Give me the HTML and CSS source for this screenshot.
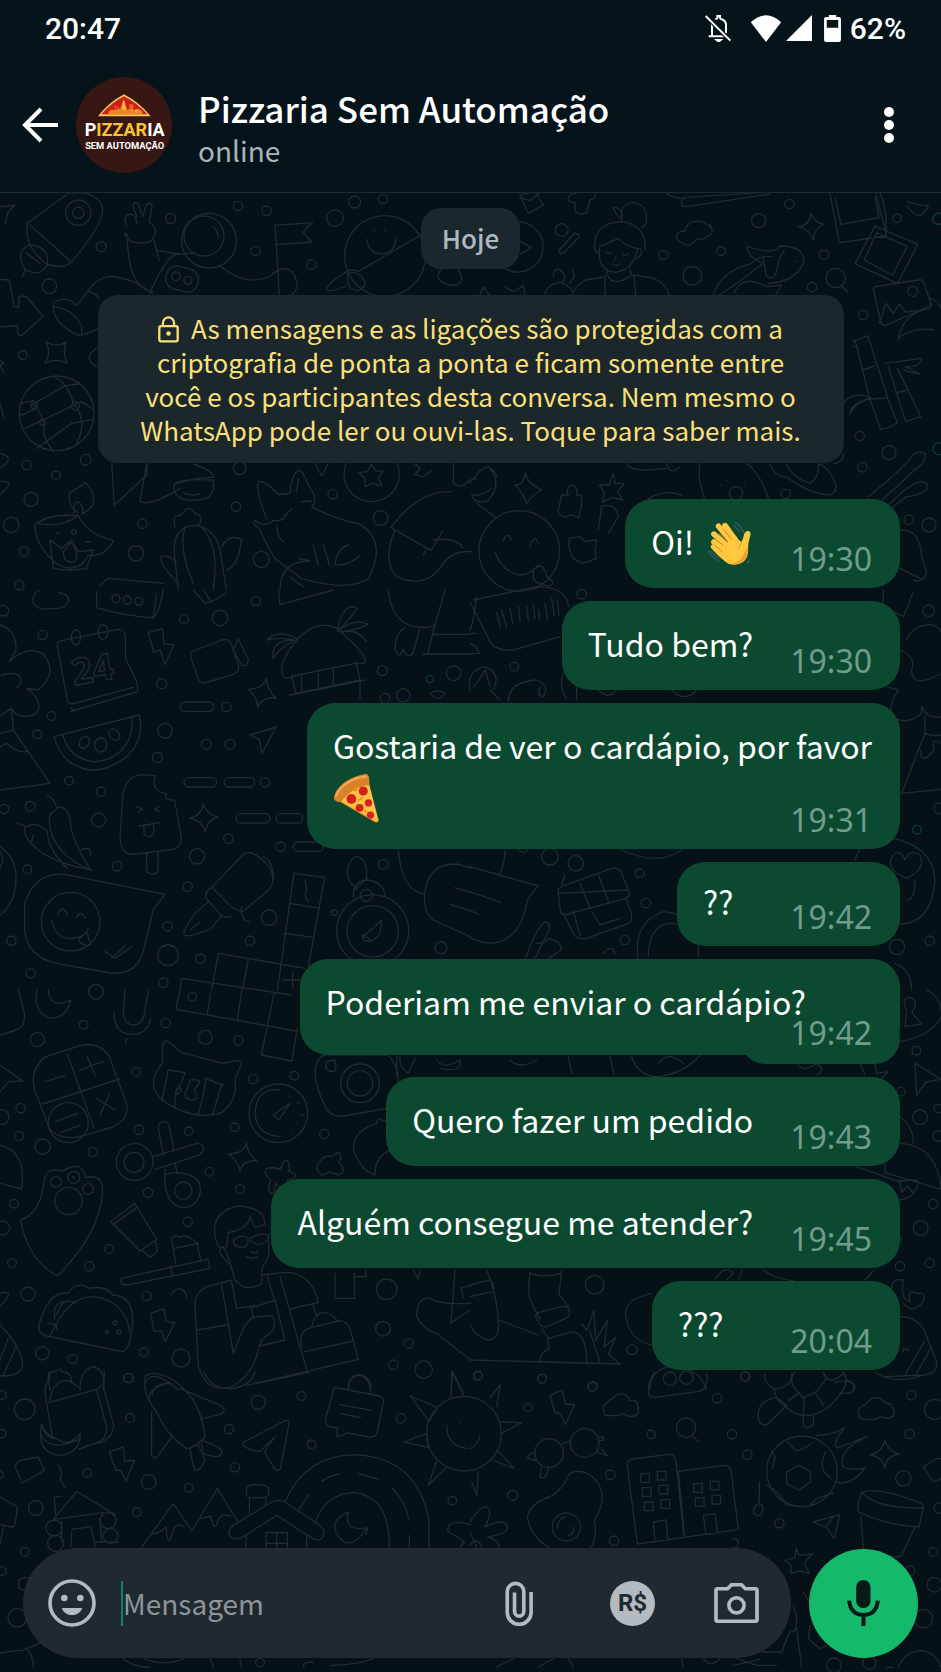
FILE: index.html
```html
<!DOCTYPE html>
<html lang="pt-BR">
<head>
    <meta charset="UTF-8">
    <meta name="viewport" content="width=device-width, initial-scale=1.0">
    <title>Pizzaria Sem Automação</title>
    <link rel="stylesheet" href="styles.css">
</head>
<body>
    <!-- Papel de parede -->
    <svg class="wallpaper" viewBox="0 0 2823 5016" preserveAspectRatio="xMidYMin slice" aria-hidden="true">
        <g transform="translate(0 570)">
            <path d="M82 100L205 10Q300 0 308 60Q305 110 215 215Q190 240 140 222Q70 170 82 100ZM90 105L213 215M62 190q20-35 45-22q40 10 35 55q-20 35-50 22q-30-5-30-55M75 240l-8 20M0 50l45-4q-30 20-28 58M80 190l40 30"/>
            <circle cx="235" cy="68" r="38"/><circle cx="235" cy="68" r="17"/>
            <path d="M380 110q-15-35 15-38q15 10 15 30M410 80l-10-30q-2-18 14-10l14 40l12-38q16-8 16 8l-8 48q20 10 18 30q-8 35-40 30q-45 4-52-30M380 130q5 90 20 125q20 45 58 50M462 150l16 62M448 312q50-110 78-118l60-6M475 182l60 10"/>
            <circle cx="627" cy="152" r="82"/><circle cx="612" cy="138" r="60"/><path d="M640 110q15 15 15 35"/>
            <rect x="497" y="232" width="98" height="70" rx="32" transform="rotate(14 546 267)"/><circle cx="528" cy="259" r="13"/><circle cx="564" cy="271" r="12"/>
            <path d="M660 228q80 65 150 30q60-50 80 15q5 30-20 45M838 312L825 106l112-8l-28 28l26 30l-105 8"/>
            <circle cx="1155" cy="198" r="121"/><path d="M1100 148q5 42 45 44q40-5 42-45M1122 122v3M1155 118v3M980 300q0-20 60-55q15-10 35 0l190-112M980 300q10 8 60-12M1045 250q-10 50 30 52q30-15 15-35q-15-25-45-17"/>
            <path d="M1330 235q-30 20-5 40q35 20 55 5q10-20-5-40"/>
            <path d="M0 268l28 2l14 80l14 2v-30q20-10 30 5l44 52l-66 58q-15 0-10-30l-54 4M165 335q40-20 65 12l48-62q30-30 70-24q60 10 110 50M160 340q-5 60 75 96q35-5 60-20M160 350q60 5 85 60v20M268 305q20 5 30 22"/>
            <path d="M138 455q30 20 60 2q-10 30 2 62q-30-15-64 0q18-30 2-64M0 510l12 10l-12 6l12 22"/>
            <circle cx="170" cy="670" r="112"/><path d="M75 715l170-80l30 20M95 645l100-58l40-5M110 775L215 700l65-12M100 640q40 50 30 90q10 30 30 55M160 560q45 20 60 80q45 50 10 120M62 640l40-8M62 675q30-10 45-20"/>
            <circle cx="102" cy="645" r="10"/><circle cx="226" cy="648" r="12"/><circle cx="128" cy="697" r="9"/>
            <path d="M290 475q-45 30 0 55M0 640l12 45M335 820l8 125l98-90V820M440 820l-20 115q30 15 120-40M525 880q20-15 115-10q5 40-20 55q-70 15-90-10q-15-20-5-35M580 822q60 20 60 40q-60 0-110 20M550 908q20 12 50 4"/>
            <path d="M0 790q50 10 0 45M0 875q55-5 0 38M235 968q-35-20-25-60l48-30q50 60-8 92M222 970q-5-20 10-36q20 8 15 38M105 1005q40-35 130-28q25 55 105 75q-20 45-75 45q-30 55-90 28q-70-55-70-120ZM110 1000q80 15 125-25M150 1050l35 25l30-25l20 35l45-5l-20 55q-50 10-100 0zM170 1030l10-1M258 1056l12-1"/>
            <circle cx="222" cy="1027" r="7"/><path d="M190 1085q15-15 20-30q35 40 10 62q-30 0-30-32M525 1010q-10-40 15-32l20-22q15-5 25 15q30 10 10 35M535 1200l-12-110q-5-80 62-84q65 10 76 80l18 114M555 1010q-20 70 25 170M600 1008q60 50 40 190M665 1070q20-40 60-22q-10 80-45 92M535 1180q-60-60-52-80q30-10 45 20M300 1185l25-20l165 15"/>
            <path d="M800 985q-35-85-25-110q20-5 60 38q40 0 35-10q10-70 35-60l25 50q25 35 5 58q80 40 140 50q90 50 30 165q-60 40-200 0l-80-60q-30-50-50-95q-20-5-10-20q30 25 55 0q30 5 35-15l20-18M890 905q5-30 5-40M905 935l30-2M940 1065l15 60M970 1065l18 60M1005 1125q5-50 40-60M1010 1125q40 0 70-28M830 1010q5 40 20 45M895 1105l35 8q-90 0-90 87M870 1160l40 30"/>
            <circle cx="1115" cy="852" r="83"/><path d="M1115 822l10 20l24 2l-14 18l10 26l-28-8l-22 10v-24l-18-18l26-4zM945 820l20 38l20-38M1245 822l15 12l-15 20l25 6l25-20M1355 905q-100-5-182 108l120 68l35-58M1185 1020q-40 90 5 140q90 40 140-40q30-40 83-35M1278 1078l-8 18M1300 1050q70-10 90 25M1360 820v60q20 20 50-10"/>
            <circle cx="148" cy="289" r="22"/><circle cx="304" cy="170" r="15"/><circle cx="714" cy="48" r="14"/><circle cx="512" cy="86" r="15"/><circle cx="800" cy="62" r="14"/><circle cx="767" cy="183" r="14"/><circle cx="934" cy="224" r="14"/><circle cx="1005" cy="84" r="25"/><circle cx="1149" cy="27" r="14"/><circle cx="1064" cy="36" r="18"/><circle cx="68" cy="496" r="13"/><circle cx="80" cy="825" r="14"/><circle cx="257" cy="809" r="16"/><circle cx="168" cy="856" r="13"/><circle cx="93" cy="928" r="21"/><circle cx="34" cy="1005" r="23"/><circle cx="72" cy="1084" r="14"/><circle cx="427" cy="1001" r="14"/><circle cx="408" cy="1090" r="23"/><circle cx="708" cy="950" r="14"/><circle cx="719" cy="835" r="19"/><circle cx="784" cy="1108" r="24"/><circle cx="998" cy="913" r="14"/><circle cx="1142" cy="984" r="22"/><circle cx="58" cy="1186" r="14"/>
        </g>
        <g transform="translate(1410 570)">
            <path d="M150 15l45-10l25 40l-45 25zM150 22l30 10l30-25M300 15l30-10h40q15 20-10 25l-10 38q-20 10-35-5v-25q-30 0-15-23M120 100a75 75 0 1 1-15 135M152 155l32 18l-32 20"/>
            <circle cx="275" cy="120" r="19"/><path d="M268 180l45-50q15 0 15 10l-48 50q-12 5-12-10M375 180q-10-80 80-85q75 10 70 85M388 170l58-25q20 25 55 30M388 175q-5 70 50 72q55-10 65-72q15 0 10 20l-12 10M375 165q-5 20 15 30M408 186q10 8 18 0M458 192q10 8 18-2M438 200l-5 12M428 222q10 8 20 0M456 90q-10-50 35-52q45 8 38 60l-10 15M455 88q-20-15-25-35q20-5 28 25M412 245l-5 15l-60 10q-30 15-42 48M480 240l5 15l60 8q50 20 52 55M405 265v50M492 260l5 55M415 260q15 30 65 0M225 315q5-35 50-38q25 10 35 30M250 260q0-25 18-22q25 15 10 38M308 240l5 20l-15 20M105 290l25 15l30-18l5 30M30 315l10-25l18 25"/>
            <path d="M590 10q30 20 60 12l280-18M640 25q-15 25 10 25L900 12M640 160q-30-10-15-32q10-5 20-5q10-40 60-25q20 20 15 5q15 30-5 35q-20 15-35 8q-20 30-40 14"/>
            <path d="M985 110q35-5 38-40q10 30 38 32q-30 15-30 48q-15-35-46-40M1080 10l28 148l142-20L1215 0M1095 25l18 78l115-20L1215 20M1228 5q25 50 20 130M1215 108l128 55l-60 118l-128-60zM1220 128l92 42l-45 85l-85-45zM1310 45q20 30 35 32q20-5 30-30q-30 0-65-12M1215 290l130-20q15-5 20 20l20 55l-140 62q-10 0-15-20l-20-90zM1228 400l20-60l22 30l18-28l20 25l30-5"/>
            <circle cx="1328" cy="304" r="15"/><path d="M1285 450q10-80 95-95v-30q30 10 33 30M1290 440q50-30 100-20"/>
            <path d="M730 315q20-70 115-95q20-25 60-20M830 168q80 30 100 0q75 0 72 50q-30 60-108 62M830 170q5 30 30 40l18 10q-60 50-130 95M880 205l8 50q20 20 30-5q10-50 25-70M790 310q30-60 100-20l45-5l-20 35M980 212v3"/>
            <circle cx="1097" cy="264" r="29"/><path d="M1115 288l20 20M1148 455l45-18l60 185M1155 450l45 180l32 88q20 0 50-20l-30-75l-50 5M1148 470h15M1178 540l35-12M1245 520l110-15q-5 30-50 25l45 22q-10 0-50-12M1255 530l52 165l45-15l-40-85l-30-60M1282 608l30-8M1120 640q30-40 85-15q-50 10-65 48q0-30 60-50"/>
            <path d="M1195 920q100-80 130-120q15-20 40-10q5 25-20 40L1215 950M1255 945q60-60 95-70q30 0 18 25q-30 20-60 20l-50 40M1090 820q30 0 30-30M900 825q20 40 50 35l20 15q60 40 110 40q25-10 15-40q-20-45-50-55M950 825q20 40 70 55q30-20 25-60"/>
            <path d="M20 865q-20 0-20 15M80 860q-5-20-25-28M10 870q30-50 50-35q40 50-10 100q-40 5-45-20q30 5 60-20M165 845q5 35 50 55q-30 15-45 40q-10-30-35-55q30 0 30-40M265 960l10-45h20q-10-20 10-30q20 5 15 30h15v25l-8 42l-25-8l-15 8l-22-10zM430 850l5 30h28l-20 25l15 25l-30-8l-30 15l5-30l-15-22h30zM470 820q5 20 60 20l60-4M590 820q10 40 40 10M690 820q-10 40 15 110M830 820q40 30 65 105M750 885v2M770 870v2M790 890v2M825 885v2M535 925q60-30 100-8"/>
            <circle cx="798" cy="910" r="20"/><circle cx="148" cy="1083" r="121"/><path d="M100 1055q10-35 25-5M180 1068q15-40 25-5M75 1085q20 60 75 70q30 0 55-30M190 1140q30-30 40 20q30 20 10 28q-50-5-50-30zM20 940l55 40M385 1020l10-70q40-15 50 30l-30 50M300 1045l30-5l15 15l35-5l-5 35l5 20l-40 15l-30-15q-20-35-10-60M1290 1020q60-5 65 80l15 50q-10 30-40 20M1290 1135l60 30"/>
            <circle cx="580" cy="195" r="14"/><circle cx="667" cy="257" r="28"/><circle cx="753" cy="184" r="13"/><circle cx="866" cy="92" r="21"/><circle cx="958" cy="42" r="14"/><circle cx="1026" cy="291" r="14"/><circle cx="1062" cy="194" r="14"/><circle cx="1281" cy="85" r="13"/><circle cx="1179" cy="375" r="14"/><circle cx="1169" cy="738" r="14"/><circle cx="1257" cy="788" r="21"/><circle cx="1177" cy="832" r="14"/><circle cx="947" cy="912" r="14"/><circle cx="1316" cy="989" r="14"/><circle cx="1377" cy="1005" r="21"/>
            <circle class="wallpaper-teal" cx="1405" cy="86" r="17"/><circle class="wallpaper-teal" cx="1407" cy="776" r="18"/>
        </g>
        <g transform="translate(0 1770)">
            <path d="M100 40q-5-30 20-40M100 40q20 25 55 15q45 5 50-25q0-20-30-22M290 5v48q80 25 170 30q20-20 30-85M460 80l10-70M580 0l35 40q30-5 60-30M612 0l20 35M835 0l5 44L1000 0"/>
            <circle cx="348" cy="26" r="12"/><circle cx="382" cy="30" r="12"/><circle cx="416" cy="34" r="12"/>
            <path d="M172 170q-2-15 12-18l170-34q18 0 22 18v68l34 70l4 30l-200 60M172 170l30 160q2 12 14 12l185-50M212 352l5 10l190-55"/>
            <ellipse cx="228" cy="142" rx="14" ry="22"/><ellipse cx="309" cy="126" rx="15" ry="22"/>
            <text class="wallpaper-day" x="215" y="275" transform="rotate(-10 285 240)">24</text>
            <path d="M445 128l42-12l6 46l28 2l-26 60l-14-44l-20 6zM575 185l90-35q20-5 28 10l22 65q5 20-15 28l-85 26q-15 0-20-12l-22-62q-3-15 2-20M700 180l15-34l30 65q-5 20-20 15zM745 298q40 0 55-32q0 30 28 58q-40-5-55 28q0-30-28-54M750 435l78-24l-42 80l-8-42z"/>
            <path d="M0 105q50 15 48 75l-20 35q50-50 100-25q50 60-15 110l-32-5q60 50 20 80q-50 15-66-20l-32 20M5 255q60-15 58 20q-5 15-15 18M35 360l5 60L150 580L0 600M0 430l40-10M0 470l20-10q30 30 60 25"/>
            <path d="M162 440l256-65q20 90-60 140q-80 50-150 0q-35-30-46-75ZM188 435q20 70 90 80q70 0 105-60q18-35 12-72"/>
            <ellipse cx="253" cy="457" rx="14" ry="19" transform="rotate(30 253 457)"/><ellipse cx="302" cy="465" rx="18" ry="21"/><ellipse cx="343" cy="434" rx="14" ry="19" transform="rotate(-40 343 434)"/>
            <path d="M845 240q0-35 45-90q60-65 120-35q70 60 85 90q10 20-30 15l-185 38q-30 20-35-18M1012 120q20-90 60-65q-20 30-58 68q50-40 90-20q-30 15-80 22q50-10 75 30M890 145q-60-30-88 5q40-10 80 0q-70 0-62 55q15-30 65-55M875 255l12 55L1080 270l-12-55M870 315l225-45M955 250v50M1000 238v48M1080 275v50M905 300v-45"/>
            <rect x="541" y="336" width="100" height="28" rx="14"/><rect x="552" y="563" width="98" height="28" rx="14"/><rect x="672" y="563" width="92" height="28" rx="14"/><rect x="708" y="671" width="102" height="28" rx="14"/><rect x="828" y="671" width="80" height="28" rx="14"/><rect x="880" y="756" width="90" height="28" rx="14"/>
            <path d="M466 557q-15 45 34 55q-10 20 24 18l20 115q0 30-30 34l-110 14q-40 2-44-45l8-130q5-60 60-64ZM440 788v50q0 14 18 14q16 0 16-14v-54M410 650l18 8l-14 8M480 648l-16 10l14 6M418 708l62-10M432 706v25q10 15 24 5q10-10 4-32"/>
            <path d="M568 685q35-5 42-44q10 35 44 40q-30 5-38 44q-10-35-48-40M140 615q25 10 30 40q25-15 40 30q0 60 62 155q-120-50-125-150q0-20 20-30M52 700l30 10q25-20 60 15q0 50 60 110M75 710q-10 30 40 70q50 40 160 60M100 735l-5 20M240 780q40-15 30 20M0 770q60 40 45 130q-10 50-45 75M0 785q15 20 0 50"/>
            <path d="M195 853l300 60l-35 44l-28 120q-20 80-100 72l-160-28q-90-20-98-100v-80q30-95 121-88Z"/>
            <circle cx="212" cy="995" r="88"/><path d="M155 990q10 55 55 55q45 0 55-30M174 972q12-30 28 0M230 982q12-25 26 2M235 1050l25-25l12 38q-20 10-37-13M315 1085l30 20l50-35M335 1105l40-38"/>
            <path d="M638 890l92-98q15-10 35 2q50 30 54 70q0 25-20 42l-70 58q-30 0-70-50q-20-15-21-24M635 892q-25 15-15 35l45 50q20 10 28 0M625 935l-45 40l-28 50q-5 15 20 12l58-18l32-40M570 1020l30-25M725 950q-5 40 22 45M790 800q30 15 30 65"/>
            <path d="M882 850l92 12L925 1130M882 850L832 1200M868 940l92 15M852 1030l90 12M655 1090l260 45M655 1090L635 1200M745 1108l-18 92M545 1165l330 50M545 1165l-5 35M915 870l5 30q-10 20 5 35M850 1170h60M878 1145v50"/>
            <circle cx="1118" cy="1022" r="108"/><circle cx="1118" cy="1024" r="77"/><circle cx="1099" cy="916" r="18"/><path d="M1060 920q0-50 45-50q50 10 50 50M1042 840q10-40 30-40q30 5 28 65l-30 30q-30-20-28-55M1090 1040l55-50l-5 40l-20 22q-10 0-18-10zM1090 1030q-10 30 30 22"/>
            <path d="M1195 780q10 120 75 132M1280 880q20-60 90-58l43 12M1280 880q-20 80 20 110l110 50M1365 893l48 15M1350 943l63 20M1165 0q10 110 100 112q30 0 40-8L1335 0M1215 112q-30 20-30 65q15 35 25 0q15 35 30 10l18-68M1305 105l-22 85M1268 192h145M1300 133h110"/>
            <circle cx="1210" cy="316" r="20"/><circle cx="1155" cy="325" r="15"/><path d="M1290 310q20-15 45 0q-20 30-45 0"/>
            <circle cx="10" cy="62" r="16"/><circle cx="128" cy="135" r="14"/><circle cx="552" cy="88" r="14"/><circle cx="660" cy="84" r="23"/><circle cx="767" cy="33" r="14"/><circle cx="485" cy="281" r="15"/><circle cx="679" cy="351" r="14"/><circle cx="154" cy="378" r="13"/><circle cx="112" cy="433" r="13"/><circle cx="495" cy="422" r="22"/><circle cx="619" cy="463" r="15"/><circle cx="690" cy="463" r="15"/><circle cx="472" cy="502" r="15"/><circle cx="207" cy="572" r="13"/><circle cx="303" cy="605" r="14"/><circle cx="795" cy="577" r="14"/><circle cx="12" cy="657" r="14"/><circle cx="91" cy="649" r="15"/><circle cx="296" cy="690" r="21"/><circle cx="685" cy="746" r="14"/><circle cx="591" cy="799" r="23"/><circle cx="842" cy="770" r="14"/><circle cx="351" cy="829" r="14"/><circle cx="82" cy="838" r="13"/><circle cx="563" cy="890" r="14"/><circle cx="807" cy="983" r="23"/><circle cx="503" cy="1009" r="14"/><circle cx="34" cy="1052" r="14"/><circle cx="750" cy="1052" r="14"/><circle cx="504" cy="1096" r="31"/><circle cx="601" cy="1106" r="14"/><circle cx="92" cy="1150" r="14"/><circle cx="490" cy="1178" r="14"/><circle cx="1147" cy="242" r="15"/><circle cx="1361" cy="250" r="22"/><circle cx="1150" cy="823" r="15"/><circle cx="1323" cy="1073" r="18"/><circle cx="1003" cy="968" r="8"/>
            <circle class="wallpaper-teal" cx="1290" cy="267" r="11"/>
        </g>
        <g transform="translate(1410 1770)">
            <path d="M0 35l55 110q15 40 75 35l140-40M0 130h20M0 190h28q-10-25-28-30M10 30L200-10q90 0 95 60M20 20q-10 80-20 100M80 68l12 45M95 60l15 52M120 55l8 45M145 50l5 45M170 50l5 42M190 45l5 42M205 60l4 30M225 40l8 50M245 25l8 50M262 30l5 45"/>
            <path d="M0 300q-10-60 45-70q50 20 25 70M10 290q20-20 35-50l15 50M60 300l30 30M115 335q0-60 85-65q40 15 20 50q-20 0-10-30M280 250q-15 40 10 75M320 290v40M385 300q30 30 55 0M605 300q40 40 75 0"/>
            <path d="M1240 0v50l60 30l30-75M1310 150q20-50 80-45q20 10 23 20M1290 180q50 20 35 60q0 60 88 10M1250 290l35 10q-40 60-10 85q40 20 80-15v-20q20 40 58 30M1365 430l-70 180l118-12M1365 380v50q20 10 48 5M1352 480q0 50 40 0q-10-40 21-20"/>
            <circle cx="1376" cy="62" r="17"/><circle cx="1408" cy="655" r="16"/>
            <path d="M1155 810q20-70 95-68q140 20 145 130q-10 130-108 130M1310 865q-70-30-40-70q20-20 35 15q15-35 45-15q20 40-40 70M1335 870q0 60-25 60M455 780q110 50 180 0M0 830l205 58q-20 20-32 40q-15 80-52 110q-50 40-121 5M0 905l92 32M0 962l25 10M105 780q0 40-15 70"/>
            <path d="M265 910q-5-15 10-20l150-55q20-5 28 12l25 60q0 15-10 18l-185 50q-10 0-12-15ZM330 880l30 75M385 855l32 85M280 970l30 60q10 20 40 15l125-45q15-10 8-35l-15-40M310 965l20 70M365 965l25 40l60-20M275 885l10-30M265 910l205-10M165 1110q30-90 60-115q20 0 10 30l-40 80M200 1060q30 0 35-15q40 10 40 35l-40 25M505 1110q-20-110 75-145q110 10 105 110v25M535 1100q0-90 60-100q70 0 80 60M400 1090q25-30 35 0"/>
            <circle cx="240" cy="800" r="25"/><circle cx="317" cy="820" r="23"/><circle cx="509" cy="850" r="13"/><circle cx="528" cy="939" r="14"/><circle cx="464" cy="1050" r="14"/><circle cx="1281" cy="1071" r="23"/><circle cx="1379" cy="1052" r="14"/><circle cx="160" cy="772" r="15"/><circle cx="133" cy="230" r="13"/><circle cx="335" cy="13" r="14"/>
            <circle class="wallpaper-teal" cx="1341" cy="719" r="13"/>
            <path d="M1275 1120q50 20 50 80"/>
        </g>
        <g transform="translate(0 2970)">
            <path d="M55 0l18 70q5 40-25 50l-48 15M145 0q5 60 68 30q-20 65-70 52q-45-20-32-82M375 0l-5 60q0 45 30 45q30 0 35-45l10-60M342 68q0 65 55 65q45 0 55-48M380 145l-4 18M540 0l-12 58l360 65M632 10l-10 60M725 0l-12 88M822 10l-38 185l92 18l16-100M528 58l5-30"/>
            <circle cx="577" cy="20" r="13"/>
            <path d="M118 220q5-15 25-22l100-32q60-10 85 35l50 135q15 50-40 75l-85 25q-70 20-105-20l-45-120q-10-50 15-76ZM202 192l80 222M128 342l230-75M135 275l60-18M240 240l70-26M262 200l24 58M290 325l55 35M328 312l-28 64M168 395l65-25M180 428l60-22"/>
            <circle cx="205" cy="398" r="60"/>
            <path d="M488 215q-5-70 15-62l42 35l125 32q60-15 55 0l-20 48q10 60-40 100q-60 20-130-10q-90-40-72-100ZM505 240l50 8M505 240l-20 95M555 250l-30 70v35M615 265l55 20M618 265l-10 60l-15 50M665 285l-28 90M570 270q30-5 28 10l-15 20q20 30-10 30q-30-10-10-35zM525 310q10-30 20-10q-10 20-20 10"/>
            <circle cx="835" cy="370" r="88"/><path d="M840 300q-70-10-75 70q5 65 75 70M820 375l50-35l-33 50zM870 318v1M892 335l5 8M900 372l10 5M890 400v1M878 418v1"/>
            <path d="M945 245q5-60 50-50h170q25 30 30 65v90l-165 28q-40 5-55-30q-30-60-30-103M978 215l25-5q10 20 0 35q-20 0-25-12z"/><circle cx="1080" cy="280" r="58"/><circle cx="1080" cy="280" r="38"/>
            <path d="M1200 200q-5 30 25 50l20-45M1310 210q20 30 70 0q10 40-60 25M1060 480q0-60 70-80q0-20 15-10l20 5M1060 480q20 60 65 75q0-60 50-75M1190 200v60"/>
            <path d="M475 415q0-20 15-20q15 0 18 15l14 75M475 415l15 80M460 500l130-40q20 0 20 18q0 12-15 18l-130 42M525 520l8 32M495 540q-5 60 15 90q35 40 75 10q30-40 5-72q-40-30-92-15"/>
            <circle cx="404" cy="516" r="55"/><circle cx="402" cy="517" r="30"/><circle cx="550" cy="602" r="26"/>
            <path d="M685 492q45 0 55-33q0 30 30 54q-40-5-50 30q-5-30-35-51M800 535q30-5 42 5q5-30 20-30q10 20 5 35q30 5 15 20l-20 5q10 35-10 35l-25-25l-5 30q-25 5-10-40q-25-20-12-35M950 530q20-40 45-30l20-15q15 20 0 30q30 30 0 40l-30-10q-25 25-35-15"/>
            <path d="M62 690q60-20 70-115q5-45 55-32q60-35 70 20q55-15 50 50q-10 120-135 245q-90-50-110-168Z"/><circle cx="206" cy="633" r="41"/><circle cx="168" cy="575" r="16"/><circle cx="221" cy="562" r="18"/><circle cx="264" cy="597" r="16"/><circle cx="221" cy="562" r="3"/>
            <path d="M0 465q80 20 65 132L0 580M0 225l68 48l-42 2l-26 30M332 695l72-55l66 108l-50 35zM340 703l70-50M465 752l8 30l-22 20l-24-20M362 865l260-57q8 5 6 28L380 885q-20 0-18-20M512 828l6 28M528 822l-14-75q10-15 25-5q20-10 35 5q25 10 20 30l8 32M525 775l70-15"/>
            <path d="M655 770q-40-100 60-122q80 5 80 55l-30 10l-15-35q0 35-65 50l-5 40M655 770q20 0 25 20l10 30l15 50q35 40 80 10l2-50q30-30 15-90M680 770q-25 0-20 20l25 30M700 750q30-20 45-5q0 35-30 25q-15-5-15-20M752 745q30-20 55-10q-5 30-35 28q-20-5-20-18M755 785q15 10 20-5M740 800q15 10 30 0M810 730l15-3M695 870l-75 20q-40 20-35 60l10 180q30 90 110 55q60-40 70-110M590 1020l90-15M665 885l35 205l30-75q20-40 55-35q50-15 35 40l-35 30l-10 25M695 875l15 80l55-8M750 955l75-25l30 120l-75 18M802 860l20 65M840 860l80 280M785 855l70-8q80 0 100 90l-85 20M940 945l10 35M765 1180l310-72l-20-75q-10-50-50-38l-80 20q-30 15-20 50M915 1085l145-32M935 1010q15-60 60-35l20 20M515 915q5-20 25-18q20 5 20 25M755 955l5 30"/>
            <path d="M1005 850v75h58v-75M1063 860h35v-22M1240 840l15 28l5-28M1365 840l-12 160M1380 895l33-8M1385 900l5 25M1250 980q0-60 40-55q30 20 123 15M1250 980q20 40 60 50q60 50 103 80M1410 960q-30 20-60 40"/><circle cx="1160" cy="898" r="31"/>
            <path d="M118 1000q30-100 85-90q30-40 65-15q50-10 70 20q60 0 60 80q-5 80-30 90L140 1038q-30-10-22-38ZM150 1040q50-120 130-120q95 10 110 110M170 975q20-60 55-35M145 1000q30 0 25 20M165 985q-10-50 35-50"/><circle cx="345" cy="999" r="6"/><circle cx="357" cy="1025" r="6"/><circle cx="321" cy="1027" r="5"/>
            <path d="M452 970l40-14l6 38l26 4l-28 56l-12-32l-22 2zM0 910q50-15 0 40M0 1005q60 60 68 115q0 40-68 38M0 1110l25-65M10 1155l38-85M150 1200q-10-60 15-55q20-15 20 0q30 0 30 35M240 1200q0-60 40-70q40 10 30 70M435 1180q20-50 100 20M1045 1200q0-45 35-45q35 5 32 45M1355 1200v-55l30 55"/>
            <circle cx="288" cy="5" r="22"/><circle cx="112" cy="149" r="21"/><circle cx="251" cy="104" r="13"/><circle cx="497" cy="99" r="14"/><circle cx="616" cy="142" r="21"/><circle cx="715" cy="151" r="14"/><circle cx="409" cy="245" r="13"/><circle cx="759" cy="267" r="14"/><circle cx="883" cy="257" r="13"/><circle cx="62" cy="355" r="14"/><circle cx="5" cy="381" r="22"/><circle cx="57" cy="438" r="14"/><circle cx="417" cy="419" r="14"/><circle cx="566" cy="424" r="13"/><circle cx="704" cy="412" r="13"/><circle cx="973" cy="432" r="14"/><circle cx="128" cy="470" r="23"/><circle cx="278" cy="486" r="14"/><circle cx="628" cy="545" r="13"/><circle cx="444" cy="608" r="14"/><circle cx="720" cy="597" r="14"/><circle cx="42" cy="641" r="13"/><circle cx="8" cy="714" r="21"/><circle cx="563" cy="695" r="14"/><circle cx="327" cy="777" r="13"/><circle cx="36" cy="819" r="13"/><circle cx="268" cy="829" r="14"/><circle cx="84" cy="912" r="21"/><circle cx="440" cy="918" r="14"/><circle cx="127" cy="1090" r="20"/><circle cx="218" cy="1107" r="14"/><circle cx="431" cy="1087" r="13"/><circle cx="543" cy="1104" r="27"/><circle cx="385" cy="1164" r="14"/><circle cx="1149" cy="1016" r="22"/><circle cx="1226" cy="1060" r="14"/><circle cx="1180" cy="1124" r="14"/><circle cx="1271" cy="1139" r="26"/>
        </g>
        <g transform="translate(1410 2970)">
            <path d="M120 210q30 30 80 0M295 200l10 50M420 198l12 55M485 200q20 60 80 60q80-10 125-65M565 220q30-40 75 0M980 220q20 30 60 0q30 20 0 35M1170 220l15 35M1215 220l5 30l35-5l-20 20M1370 0q40 20 43 60M1290 155q100-20 123-75M1310 60q-20-35 10-38q30 10 5 45l30 35l-50 8z"/>
            <path d="M1335 220l78 48l-45 8l-28 40zM1290 380q40 30 40 80M1245 520v28l168 50q-10-130-120-138M1160 530l125 45q50-10 60 0q-10 50-55 55M1288 568l8 40l15-20l20 20M1290 740q10 10 0 20M1270 930q-20-70 30-60q-10 60 20 65q-10-40 20-25q30-5 20 25q-30 40-60 5M1290 980q60 0 80 60l28 70q10 40-35 45L1250 1160M1305 1155l58-100M1340 1150l45-80M1300 1085v-10l15 5"/>
            <path d="M50 840q30 70 35 150q5 60-30 60q-40-10-55-45M0 885l60-15q15 10 10 35L0 920M85 990l120 45M180 848q-10 70 5 90l25 50M275 840l-8 75l30 35M200 985q-10-15 15-20l60-15q30-5 22 30l-65 30q-25 5-32-25M215 1015l20 30l75-20q40 10 40 90M235 1045q-5 15 3 30q-30 15-28 40M0 1110l450 12l-35-30l22-50l-35 30l10-80l-35 60l-5-90l-22 60q-10-15-15-20M390 1115l-30-90M180 850q40 15 95 0M545 910q-95 20-75 80q10 60 75 75M735 870q30-50 55-20l-20 20M805 870l12-32M880 840q40 30 90 32M1185 870l30-32M540 1200q0-60 60-70q90 0 110 70M885 1150q-5 30 25 45M965 1150q5 40-55 50M1060 1150q20 40 60 0M1130 1170q30 10 20 30"/>
            <circle cx="374" cy="884" r="28"/><circle cx="486" cy="1079" r="15"/><circle cx="24" cy="1157" r="13"/><circle cx="216" cy="1166" r="13"/><circle cx="825" cy="1159" r="13"/><circle cx="367" cy="1190" r="13"/><circle cx="1339" cy="182" r="13"/><circle cx="1350" cy="382" r="22"/><circle cx="1292" cy="305" r="13"/><circle cx="1405" cy="356" r="13"/><circle cx="1405" cy="438" r="16"/><circle cx="1389" cy="642" r="14"/><circle cx="1352" cy="714" r="22"/><circle cx="1379" cy="819" r="14"/><circle cx="1290" cy="829" r="14"/>
        </g>
        <g transform="translate(0 4116)">
            <path d="M145 0v25q-15 20-8 50l20 120M145 92l145-40q30-15 22-60M205 25q-50 0-55 60M205 25l30 20M290 55l30 110q0 35-25 45l-60 22M310 45l30 110q5 40-45 60M165 200q-30 0-40-45M125 155q-20 90 60 95q55-10 56-64q-35 40-70 15q-35-10-46-46M122 185q25 60 120 15"/>
            <path d="M45 285q5-20 25-22l45-8l18 40l-65 38zM175 280q15 20 5 40l15 28M328 240l42-15l4 42l30-2l-26 62l-16-32h-14zM435 30q-5-30 35-25q60 10 110 80q30 50 35 110q-25 30-55 35q-60-40-90-110q-40-50-35-90ZM450 90q-15-40 60-60M455 70q10-40 55-35M540 50l110 45q40 20 10 32l-60 15M455 120v130q10 15 20 0l40-55M570 230q10 60 15 65q20 0 30-30l-22-50M605 205q60 20 62 35q-5 25-55 5l-8-30"/>
            <path d="M728 212l128-66q15-5 10 15l-25 130q-10 10-18-2l-30-50l32-45l-45 44q-50-5-52-26M1000 60q-5-15 15-12l125 24q12 5 10 18l-18 90q-5 18-25 15l-65-12l-30 12v-28q-40 0-35-30zM1045 50q0-40 35-40q30 5 32 55M1018 97l95 18M1022 125l60 12M612 0q20 50 78 50q60-5 75-50M740 40L930 0"/>
            <path d="M185 372l-22 5l5 60M160 442L230 358l115 70M160 442l150-20M215 480l-2 45M215 472l58-8l12 60M285 510h70M185 450v60M300 440l5 70"/>
            <circle cx="162" cy="468" r="24"/><circle cx="324" cy="446" r="24"/><circle cx="167" cy="514" r="24"/><circle cx="332" cy="492" r="22"/>
            <path d="M425 525L520 395l55 82L652 350l62 100M458 485q20 0 40-20q5 60 15 30q10-50 40-30M602 440l30-8q10 50 20 20q5-30 40-20M740 350q0-12 30-12q36 0 36 14v16q-5 10-36 10q-30 0-30-10zM748 378v45M798 378v20M700 460l115-70q20-10 40 0l105 70q20 20 8 35q-10 15-30 5L830 430L720 500q-20 5-32-10q-5-15 12-30ZM738 492v35M920 495v32M798 482h64v45M798 482v45M830 482v45M798 514h64"/>
            <path d="M855 390q60-140 210-142q190 10 222 200v78M945 455q30-90 115-93q110 10 108 165M898 412l28-45M965 328q30-20 55-22M1075 304l60 18M1178 350q40 40 48 90M1228 490v35M1045 420q-50 20-38 60q40 70 92-10M1045 420q-15 60 58 48l-5 20"/>
            <circle cx="1392" cy="185" r="112"/><path d="M1232 72l80 35l-25 42zM1352 75l5-78l35 75M1212 210l68-26l4 42zM1310 268l-25 72l52-52M1340 160q0 60 60 70M1380 152v1M1345 480q-10-30 40-28l28 5M1345 480q40 20 48 30l-12 15"/>
            <path d="M0 375l52 30q-5 60-15 60L0 458M10 465l-10 50M72 835q-30 0-72 8M80 830q20 20 20 58M75 830q40-10 60-30M370 860q30 25 80 26M430 860q70 25 120 0M630 860l10 26M720 860l5 26M910 886q0-20 30-14M990 880q80 0 130-20"/>
            <circle cx="385" cy="18" r="14"/><circle cx="5" cy="69" r="13"/><circle cx="74" cy="112" r="31"/><circle cx="390" cy="138" r="13"/><circle cx="775" cy="91" r="21"/><circle cx="904" cy="72" r="13"/><circle cx="687" cy="171" r="14"/><circle cx="5" cy="185" r="13"/><circle cx="935" cy="217" r="13"/><circle cx="1203" cy="139" r="14"/><circle cx="262" cy="303" r="13"/><circle cx="705" cy="286" r="14"/><circle cx="446" cy="330" r="22"/><circle cx="566" cy="347" r="13"/><circle cx="107" cy="408" r="22"/><circle cx="410" cy="421" r="13"/><circle cx="1357" cy="386" r="13"/><circle cx="74" cy="539" r="13"/><circle cx="5" cy="597" r="13"/><circle cx="52" cy="737" r="28"/><circle cx="75" cy="636" r="20"/><circle cx="780" cy="872" r="13"/><path d="M0 320q20-10 0-25"/>
        </g>
        <g transform="translate(1410 4116)">
            <path d="M60 78l30-40l-10 65M95 150l60 2l-62 32M82 235l52 55l-72-28M5 330l15 40l5-72M0 230q20-5 30-40"/>
            <path d="M240 70l36-16l10 42l28 2l-28 60l-14-32l-18-6zM405 130q-15-30 15-45q40-40 60 0q25 0 22 12q10 30-10 35q-20 5-30-8q-10 10-57 6M535 60q0-40 20-60M535 60q0 18 22 16l130-18q30-10 22-55"/>
            <circle cx="600" cy="20" r="20"/><circle cx="649" cy="17" r="20"/><circle cx="237" cy="243" r="43"/><circle cx="344" cy="213" r="43"/><path d="M278 215l22-8M196 240q-30 10-20 20l20 5M215 285l-5 32h15l12-30M385 195h15v10h-15M380 240l32 12l-20-25"/>
            <path d="M865 130q0-30 20-40q30-20 40-10l25 20l-60 58q-25 5-25-28M915 50q-5 20 20 45l40 30q70 20 120-40q50-50 25-85M955 85l30-20M1000 130l3-50M1060 100l-25-40M975 50q-20-30 0-50M975 50l25 28l40-20l30-40l-10-18M1095 30q60-10 60 20q-10 20-45 12M1000 130v30q10 15 30 0v-30M1170 140q-15-30 15-42q35-40 60-5q20 0 20 10q20 30-10 35q-20 0-25-5q-5 15-60 7M1215 0q60 40 140 10"/>
            <path d="M298 305q40-20 80 20q40 50-5 120q10 50-10 82M298 305q-20 50-60 70q-60 20-66 60q10 60 65 92"/><circle cx="289" cy="465" r="42"/><path d="M262 470q0-30 25-35M310 465q5 20-15 25"/>
            <path d="M502 516l-30-235q0-18 15-20l110-14q15 0 20 14L642 492M625 298l138-18q15 0 20 15l22 178L502 516M625 298l18 195M550 450l38-6l5 60M550 450l5 60M700 430l35-5l8 58M700 430l8 56"/>
            <path d="M512 305h26v26h-26zM562 298h26v26h-26zM517 347h26v26h-26zM567 340h26v26h-26zM523 390h26v26h-26zM573 383h26v26h-26zM671 335h26v26h-26zM721 328h26v26h-26zM676 377h26v26h-26zM726 370h26v26h-26z"/>
            <circle cx="996" cy="298" r="106"/><path d="M950 300l35-20l36 18v32l-35 24l-36-20zM952 208l25 28q20 0 48-22M905 235l10 20l-7 35M890 340q40 20 60 60M1020 400q15-25 70-35M1065 240q-15 40-2 60l20 20M1038 190q50 0 85-22q-40 50-20 60l90-35q-90 40-75 90q20 15 68 5q-50 60-90 40M1200 248q35-5 44-44q10 35 44 42q-40 5-44 44q-5-35-44-42M1030 450l80-22l-18 72l-20-32zM1090 435l-20 25"/>
            <path d="M1175 360q60-15 180 35q10 10 2 25l-10 45q-100-5-180-45q-10-10 8-60ZM1175 362q50 50 185 45M1172 435l10 110M1335 465l-40 85q-10 10-40 0"/>
            <path d="M978 530l10 20l40-5l-25 28l15 32l-30-8l-25 8v-25l-18-15l30-8zM0 450q30-50 50-45q20 10-5 60q60-30 68 0q0 20-60 30q35 10 35 30M0 480l20 45M0 520q20-30 35 5M865 395q20 0 10 30q-15 15-25-5q0-15 15-25M868 330v60M970 700q20 60 0 80q-10-10-20 20l-15 40h-60M800 860l60 20h60M790 880l80-18M980 770l15 115M1020 760l-5 40l35 30l20-10M1000 660l15 25M785 500q30 0 15 30l-10-5M130 860l-50 25M250 860l-45 25M635 860l4 25M295 860l15 26M700 860q20 30 50 0M1285 886q20-50 75-50q40 10 53 50M1270 886h-20M1360 285l40-25l13 0M1360 285l30 45l23-10"/>
            <circle cx="24" cy="11" r="13"/><circle cx="216" cy="20" r="13"/><circle cx="368" cy="43" r="14"/><circle cx="174" cy="107" r="12"/><circle cx="741" cy="79" r="14"/><circle cx="826" cy="13" r="14"/><circle cx="1324" cy="70" r="14"/><circle cx="1394" cy="112" r="30"/><circle cx="648" cy="167" r="29"/><path d="M666 190l20 20"/><circle cx="543" cy="187" r="13"/><circle cx="786" cy="187" r="14"/><circle cx="832" cy="248" r="14"/><circle cx="1319" cy="186" r="14"/><circle cx="421" cy="308" r="14"/><circle cx="128" cy="370" r="15"/><circle cx="1300" cy="319" r="23"/><circle cx="432" cy="506" r="14"/><circle cx="928" cy="454" r="14"/><circle cx="1408" cy="408" r="16"/><circle cx="1389" cy="540" r="13"/><circle cx="1393" cy="638" r="22"/><circle cx="1360" cy="740" r="28"/><circle cx="1092" cy="880" r="22"/><circle cx="1198" cy="872" r="20"/><circle cx="1320" cy="596" r="14"/>
        </g>
    </svg>

    <div class="status-bar">
        <span class="clock">20:47</span>
        <div class="status-icons">
            <svg class="icon-bell" viewBox="0 0 84 84" aria-hidden="true">
                <path d="M24 28v39M14 67h52M66 58V30q-3-14-18-16M34 16q3-2 6-3V6h8v8M38 78h12l-6 5z" fill="none" stroke="#fff" stroke-width="6"/>
                <path d="M5 6l74 74" fill="none" stroke="#05131a" stroke-width="13"/>
                <path d="M5 6l74 74" fill="none" stroke="#fff" stroke-width="6"/>
            </svg>
            <svg class="icon-wifi" viewBox="0 0 96 82" aria-hidden="true"><path d="M2 22Q48-20 94 22L48 82z" fill="#fff"/></svg>
            <svg class="icon-signal" viewBox="0 0 78 78" aria-hidden="true"><path d="M78 0v78H0z" fill="#fff"/></svg>
            <svg class="icon-battery" viewBox="0 0 50 80" aria-hidden="true">
                <path fill-rule="evenodd" d="M14 0h22v6h8q6 0 6 6v62q0 6-6 6H6q-6 0-6-6V12q0-6 6-6h8zM8 15v23h34V15z" fill="#fff"/>
            </svg>
            <span class="battery-level">62%</span>
        </div>
    </div>

    <header class="chat-header">
        <button class="back" aria-label="Voltar">
            <svg viewBox="0 0 36 36" aria-hidden="true"><path d="M36 18H3M19 2L3 18l16 16" fill="none" stroke="#fff" stroke-width="4"/></svg>
        </button>
        <svg class="avatar" viewBox="0 0 288 288" role="img" aria-label="Pizzaria Sem Automação">
            <circle cx="144" cy="144" r="144" fill="#371714"/>
            <path d="M144 52Q190 76 224 118H66Q98 76 144 52Z" fill="#f3c65a"/>
            <path d="M144 58Q186 80 214 112H76Q102 80 144 58Z" fill="#c9211a"/>
            <path d="M96 112q4-18 18-12l10-14l8 12l10-30l12 32l14-10l6 10l14-4q14 6 12 16z" fill="#e8861f"/>
            <circle cx="120" cy="92" r="7" fill="#e2381f"/><circle cx="166" cy="88" r="7" fill="#ee5a22"/><circle cx="182" cy="102" r="6" fill="#f2a533"/>
            <path d="M142 70l-4 28h12l-5-28z" fill="#f6c33f"/>
            <text class="avatar-name" x="146" y="178" text-anchor="middle">P<tspan fill="#f7c531">IZZAR</tspan>IA</text>
            <text class="avatar-tag" x="146" y="217" text-anchor="middle">SEM AUTOMAÇÃO</text>
        </svg>
        <div class="contact">
            <h1>Pizzaria Sem Automação</h1>
            <p>online</p>
        </div>
        <button class="menu" aria-label="Mais opções">
            <svg viewBox="0 0 10 36" aria-hidden="true"><circle cx="5" cy="5" r="5" fill="#fff"/><circle cx="5" cy="18" r="5" fill="#fff"/><circle cx="5" cy="31" r="5" fill="#fff"/></svg>
        </button>
    </header>

    <main class="chat">
        <div class="day">Hoje</div>

        <p class="notice">
            <svg class="icon-lock" viewBox="0 0 64 80" aria-hidden="true">
                <rect x="4" y="30" width="56" height="46" rx="5" fill="none" stroke="#fbe07a" stroke-width="7"/>
                <path d="M15 30V20a17 17 0 0 1 34 0v10" fill="none" stroke="#fbe07a" stroke-width="7"/>
                <circle cx="32" cy="52" r="7" fill="#fbe07a"/>
            </svg>
            As mensagens e as ligações são protegidas com a<br>
            criptografia de ponta a ponta e ficam somente entre<br>
            você e os participantes desta conversa. Nem mesmo o<br>
            WhatsApp pode ler ou ouvi-las. Toque para saber mais.
        </p>

        <div class="messages">
            <div class="bubble">
                <p>Oi!
                    <svg class="emoji emoji-wave" viewBox="18 20 138 140" role="img" aria-label="👋">
                        <path d="M103 24q18 10 29 36M98 32q10 14 20 20M20 112q12 18 34 32M26 110q12 14 28 22M138 148q6-2 8-10" fill="none" stroke="#36596a" stroke-width="4" stroke-linecap="round"/>
                        <path d="M72 112L38 84M82 98L38 60M92 84L52 36M104 78L72 34" fill="none" stroke="#ffc83f" stroke-width="17" stroke-linecap="round"/>
                        <path d="M98 66L122 84Q128 72 130 60Q136 46 147 52Q152 58 147 70Q141 90 142 108Q143 130 128 144Q108 158 82 150Q58 134 32 105Q24 96 32 92Q38 90 46 96L60 104Z" fill="#ffc83f"/>
                        <path d="M64 92L44 76M76 82L54 58M90 74L66 44M40 94l24 20" fill="none" stroke="#db8b1f" stroke-width="3" stroke-linecap="round"/>
                        <path d="M140 98Q144 130 128 142Q108 157 84 150Q118 150 128 122Q134 110 140 98Z" fill="#f0a02b"/>
                        <path d="M122 86q-8 8-8 18" fill="none" stroke="#e59724" stroke-width="3" stroke-linecap="round"/>
                    </svg>
                </p>
                <time>19:30</time>
            </div>
            <div class="bubble">
                <p>Tudo bem?</p>
                <time>19:30</time>
            </div>
            <div class="bubble bubble-tall">
                <p>Gostaria de ver o cardápio, por favor<br>
                    <svg class="emoji emoji-pizza" viewBox="20 16 138 152" role="img" aria-label="🍕">
                        <path d="M30 94Q60 54 124 38L130 54L157 158Q157 168 146 164L44 104Z" fill="#ffc445"/>
                        <path d="M44 103L148 164Q156 166 156 156" fill="none" stroke="#f19a2a" stroke-width="4"/>
                        <path d="M22 90Q26 66 54 44Q84 24 116 19Q128 18 129 32L130 52Q128 57 120 53Q74 64 46 100Q38 108 30 102Q20 98 22 90Z" fill="#d9822b"/>
                        <path d="M28 86Q36 62 66 44Q92 28 120 27" fill="none" stroke="#f0a850" stroke-width="7" stroke-linecap="round"/>
                        <circle cx="111" cy="71" r="14" fill="#d3211b"/><circle cx="75" cy="95" r="15" fill="#d3211b"/><circle cx="127" cy="107" r="11" fill="#d3211b"/><circle cx="100" cy="122" r="12" fill="#d3211b"/><circle cx="133" cy="144" r="11" fill="#d3211b"/>
                        <path d="M98 98l10-6M86 70l6-4M116 130l4 4" stroke="#f08f25" stroke-width="6" stroke-linecap="round"/>
                    </svg>
                </p>
                <time>19:31</time>
            </div>
            <div class="bubble bubble-short">
                <p>??</p>
                <time>19:42</time>
            </div>
            <div class="bubble bubble-lobe">
                <p>Poderiam me enviar o cardápio?</p>
                <time>19:42</time>
            </div>
            <div class="bubble">
                <p>Quero fazer um pedido</p>
                <time>19:43</time>
            </div>
            <div class="bubble">
                <p>Alguém consegue me atender?</p>
                <time>19:45</time>
            </div>
            <div class="bubble bubble-last">
                <p>???</p>
                <time>20:04</time>
            </div>
        </div>
    </main>

    <footer class="composer">
        <div class="field">
            <button aria-label="Emoji">
                <svg class="icon-smile" viewBox="0 0 144 144" aria-hidden="true">
                    <circle cx="72" cy="72" r="66" fill="none" stroke="#b3bac0" stroke-width="11"/>
                    <circle cx="49" cy="57" r="10" fill="#b3bac0"/><circle cx="97" cy="57" r="10" fill="#b3bac0"/>
                    <path d="M41 87h62q-8 22-31 22t-31-22z" fill="#b3bac0"/>
                </svg>
            </button>
            <span class="caret"></span>
            <input type="text" placeholder="Mensagem" aria-label="Mensagem">
            <button aria-label="Anexar">
                <svg class="icon-clip" viewBox="0 0 86 136" aria-hidden="true"><path d="M79 32v62a36 36 0 0 1-72 0V31a25 25 0 0 1 50 0v60a14 14 0 0 1-28 0V34" transform="translate(-1 1)" fill="none" stroke="#b3bac0" stroke-width="11"/></svg>
            </button>
            <button aria-label="Pagamento"><span class="money">R$</span></button>
            <button aria-label="Câmera">
                <svg class="icon-camera" viewBox="0 0 136 120" aria-hidden="true">
                    <path d="M11 17h30l12-12h30l12 12h30q5 0 5 5v88q0 5-5 5H11q-5 0-5-5V22q0-5 5-5z" fill="none" stroke="#b3bac0" stroke-width="11"/>
                    <circle cx="68" cy="67" r="23" fill="none" stroke="#b3bac0" stroke-width="11"/>
                </svg>
            </button>
        </div>
        <button class="mic" aria-label="Gravar áudio">
            <svg viewBox="0 0 98 138" aria-hidden="true">
                <rect x="27" y="0" width="43" height="84" rx="21" fill="#071a18"/>
                <path d="M6 62q4 42 43 43q39-1 43-43M49 105v33" fill="none" stroke="#071a18" stroke-width="12"/>
            </svg>
        </button>
    </footer>
</body>
</html>
```

FILE: styles.css
```css
* {
    box-sizing: border-box;
}

body {
    position: relative;
    display: flex;
    flex-direction: column;
    min-height: 100vh;
    margin: 0;
    overflow-x: hidden;
    background: #051017;
    color: white;
    font-family: 'Noto Sans CJK JP', 'Noto Sans', sans-serif;
}

button {
    display: flex;
    align-items: center;
    justify-content: center;
    padding: 0;
    border: none;
    background: none;
    cursor: pointer;
}

h1, p {
    margin: 0;
}

/* Papel de parede */
.wallpaper {
    position: absolute;
    inset: 0;
    z-index: -1;
    width: 100%;
    height: 100%;
    fill: none;
    stroke: #202b2d;
    stroke-width: 4;
    stroke-linejoin: round;
    stroke-linecap: round;
}

.wallpaper-teal {
    stroke: #0c3a35;
}

.wallpaper-day {
    font-family: 'Noto Sans', sans-serif;
    font-size: 110px;
    font-weight: bold;
}

/* Barra de status */
.status-bar {
    display: flex;
    align-items: center;
    justify-content: space-between;
    height: 56px;
    padding: 0 35px 0 45px;
    background: #05131a;
    font-family: Roboto, sans-serif;
    font-size: 30px;
    font-weight: 500;
}

.status-icons {
    display: flex;
    align-items: center;
}

.icon-bell {
    width: 28px;
    height: 28px;
    margin-right: 18px;
}

.icon-wifi {
    width: 32px;
    height: 27px;
    margin-right: 4px;
}

.icon-signal {
    width: 26px;
    height: 26px;
    margin-right: 12px;
}

.icon-battery {
    width: 17px;
    height: 27px;
    margin-right: 9px;
}

/* Cabeçalho */
.chat-header {
    display: flex;
    align-items: center;
    height: 137px;
    padding: 2px 47px 0 22px;
    background: #05131a;
    border-bottom: 1px solid #1c292d;
}

.back {
    margin-right: 18px;
}

.back svg {
    width: 36px;
    height: 36px;
}

.avatar {
    width: 96px;
    height: 96px;
    margin-right: 26px;
}

.avatar-name,
.avatar-tag {
    fill: white;
    font-family: 'Liberation Sans Narrow', Roboto, sans-serif;
    font-weight: bold;
}

.avatar-name {
    font-size: 54px;
}

.avatar-tag {
    font-size: 28px;
}

.contact {
    flex: 1;
    padding-top: 6px;
}

.contact h1 {
    font-size: 35px;
    font-weight: 500;
    line-height: 44px;
}

.contact p {
    color: #aab4bc;
    font-size: 28px;
    line-height: 40px;
}

.menu svg {
    width: 10px;
    height: 36px;
}

/* Conversa */
.chat {
    display: flex;
    flex: 1;
    flex-direction: column;
    align-items: center;
    padding: 15px 41px 20px;
}

.day {
    margin-bottom: 26px;
    padding: 0 21px 2px;
    background: #1a272d;
    border-radius: 20px;
    color: #aeb8c0;
    font-size: 26px;
    font-weight: 500;
    line-height: 59px;
}

.notice {
    width: 100%;
    max-width: 746px;
    margin-bottom: 36px;
    padding: 16px 20px;
    background: #1b272b;
    border-radius: 20px;
    color: #fbe07a;
    font-size: 26px;
    line-height: 34px;
    text-align: center;
    white-space: nowrap;
}

.icon-lock {
    width: 21px;
    height: 27px;
    margin-right: 6px;
    vertical-align: -4px;
}

.messages {
    display: flex;
    flex-direction: column;
    align-items: flex-end;
    align-self: stretch;
    gap: 13px;
}

.bubble {
    display: flex;
    align-items: flex-end;
    justify-content: space-between;
    gap: 37px;
    padding: 20px 28px 9px 26px;
    background: #0b4a31;
    border-radius: 28px;
}

.bubble p {
    margin-bottom: 16px;
    font-size: 32px;
    line-height: 44px;
}

.bubble time {
    color: #719c8b;
    font-family: 'Noto Sans', sans-serif;
    font-size: 32px;
    line-height: 40px;
}

.bubble-tall {
    position: relative;
    align-items: flex-start;
    min-height: 146px;
}

.bubble-tall time {
    position: absolute;
    right: 28px;
    bottom: 9px;
}

.bubble-short {
    min-width: 223px;
    padding-top: 17px;
}

.bubble-short p {
    margin-bottom: 14px;
}

.bubble-last {
    min-width: 248px;
}

/* A hora passa da borda de baixo do balão */
.bubble-lobe {
    position: relative;
    margin-bottom: 9px;
    padding-right: 94px;
    padding-bottom: 16px;
}

.bubble-lobe time {
    position: absolute;
    right: 0;
    bottom: -9px;
    padding: 0 28px 11px 50px;
    background: #0b4a31;
    border-radius: 28px;
}

.bubble-lobe p {
    position: relative;
    z-index: 1;
}

.emoji {
    margin-top: -8px;
    margin-bottom: -8px;
}

.emoji-wave {
    width: 46px;
    height: 46px;
    margin-left: 6px;
    vertical-align: -4px;
}

.emoji-pizza {
    width: 46px;
    height: 50px;
    vertical-align: -12px;
}

/* Campo de mensagem */
.composer {
    display: flex;
    align-items: center;
    gap: 18px;
    padding: 0 23px 14px;
}

.field {
    display: flex;
    flex: 1;
    align-items: center;
    min-width: 0;
    height: 110px;
    padding: 0 32px 0 25px;
    background: #20292e;
    border-radius: 55px;
}

.icon-smile {
    width: 48px;
    height: 48px;
}

.caret {
    width: 2px;
    height: 45px;
    margin-left: 25px;
    background: #12805c;
}

.field input {
    flex: 1;
    min-width: 0;
    padding: 0;
    border: none;
    outline: none;
    background: none;
    color: white;
    font-family: inherit;
    font-size: 28px;
}

.field input::placeholder {
    color: #8b959c;
    opacity: 1;
}

.icon-clip {
    width: 29px;
    height: 45px;
}

.money {
    width: 45px;
    margin: 0 59px 0 76px;
    background: #b3bac0;
    border-radius: 50%;
    color: #20292e;
    font-family: Roboto, sans-serif;
    font-size: 24px;
    font-weight: bold;
    line-height: 45px;
}

.icon-camera {
    width: 45px;
    height: 40px;
}

.mic {
    width: 109px;
    height: 109px;
    background: #14b96c;
    border-radius: 50%;
}

.mic svg {
    width: 33px;
    height: 46px;
}
```
